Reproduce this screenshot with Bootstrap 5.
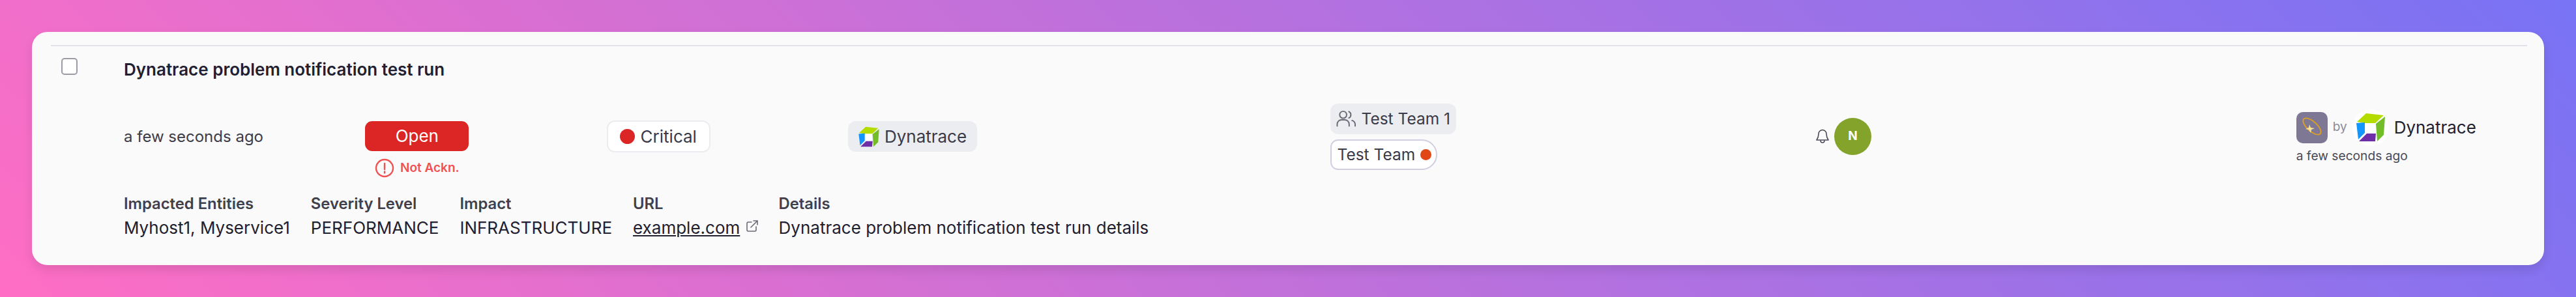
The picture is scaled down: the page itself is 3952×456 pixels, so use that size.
<!DOCTYPE html>
<html lang="en">

<head>
  <meta charset="UTF-8" />
  <title>Alert row</title>
  <link href="https://cdn.jsdelivr.net/npm/bootstrap@5.3.0/dist/css/bootstrap.min.css" rel="stylesheet">
  <style>
    body {
      margin: 0;
      height: 456px;
      padding: 49px;
      overflow: hidden;
      background: linear-gradient(45deg, #ff6ec4, #7873f5);
      font-family: Inter, "Liberation Sans", sans-serif;
      color: #1f2030;
    }

    .alert-card {
      height: 358px;
      padding: 20px 26px 0 29px;
      border: 0;
      border-radius: 24px;
      background: #fafafb;
      box-shadow: 0 8px 16px rgba(0, 0, 0, 0.1);
    }

    .alert-rule {
      height: 2px;
      margin: 0;
      border: 0;
      opacity: 1;
      background: #e2e2ec;
    }

    .title-row { margin-top: 18px; }

    .alert-check.form-check-input {
      width: 25px;
      height: 26px;
      margin: 0 71px 0 16px;
      border: 2px solid #9b9ba5;
      border-radius: 5px;
      background-color: #fff;
    }

    .alert-title {
      font-size: 26px;
      font-weight: 600;
      line-height: 36px;
    }

    .alert-grid {
      display: grid;
      grid-template-columns: repeat(10, 370.3px);
      height: 103px;
      margin: 33px 0 0 112px;
      font-size: 26px;
      align-items: center;
    }

    .time-text { color: #3c3c49; font-size: 24px; }

    .span-2 { grid-column: span 2; }

    .status-col { align-self: start; width: 159px; margin: 28px 0 -12px; }

    .status-btn {
      width: 159px;
      height: 46px;
      padding: 0;
      border: 0;
      border-radius: 11px;
      background: #dc2626;
      color: #fff;
      font-size: 26px;
      line-height: 46px;
    }

    .not-ackn {
      gap: 9px;
      height: 30px;
      margin-top: 11px;
      color: #f05252;
      font-size: 19px;
      font-weight: 600;
    }

    .chip {
      height: 47px;
      padding: 0 16px;
      border-radius: 12px;
      background: #ecedf0;
      color: #3a3a48;
      white-space: nowrap;
    }

    .chip-outline { gap: 9px; height: 49px; padding: 0 19px 0 18px; background: #fff; border: 2px solid #ececf0; }

    .team-chip { padding: 0 9px; font-size: 24.5px; }

    .team-owner {
      padding: 0 7px 0 8px;
      background: #fff;
      border: 2px solid #cfcfe0;
      border-radius: 12px 24px 24px 12px;
      font-size: 24.5px;
    }

    .sev-dot { width: 23px; height: 23px; border-radius: 50%; background: #dc2626; }

    .owner-dot { width: 17px; height: 17px; border-radius: 50%; background: #e04616; }

    .avatar-dot {
      width: 57px;
      height: 57px;
      border-radius: 50%;
      background: #84a32a;
      color: #fff;
      font-size: 19px;
      font-weight: 700;
    }

    .app-tile { width: 48px; height: 48px; border-radius: 10px; background: #7f7894; }

    .by-text { color: #8b8b96; font-size: 19px; }

    .logo-ring { width: 56px; height: 56px; border-radius: 50%; background: #fff; }

    .time-small { margin-top: 2px; color: #4a4a57; font-size: 19.2px; line-height: 26px; }

    .detail-row {
      gap: 32px;
      margin: 33px 0 0 112px;
      font-size: 26px;
      line-height: 37px;
    }

    .detail-label { color: #40404b; font-size: 23.8px; font-weight: 600; }

    .detail-link { color: #1f2030; }

    .ext-icon { margin-left: 2px; vertical-align: 3px; }
  </style>
</head>

<body>
  <div class="card alert-card">
    <hr class="alert-rule">

    <div class="title-row d-flex align-items-start">
      <input class="form-check-input alert-check" type="checkbox">
      <div class="alert-title">Dynatrace problem notification test run</div>
    </div>

    <div class="alert-grid">
      <div class="time-text">a few seconds ago</div>

      <div class="status-col">
        <button type="button" class="btn status-btn">Open</button>
        <div class="not-ackn d-flex align-items-center justify-content-center">
          <svg width="30" height="30" viewBox="0 0 30 30" fill="none" stroke="#f05252" stroke-width="2.4">
            <circle cx="15" cy="15" r="13" />
            <path d="M15 8v9M15 20.5v2" stroke-linecap="round" />
          </svg>
          <span>Not Ackn.</span>
        </div>
      </div>

      <div class="d-flex">
        <div class="chip chip-outline d-flex align-items-center">
          <span class="sev-dot"></span>Critical
        </div>
      </div>

      <div class="span-2 d-flex">
        <div class="chip d-flex align-items-center gap-2">
          <svg width="32" height="32" viewBox="0 0 44 45">
            <path fill="#b4dc00" d="M1 14 15 1l27 3-13 12H13z" />
            <path fill="#1496ff" d="M0 16l13-1v16L3 41z" />
            <path fill="#73be28" d="M44 6l-2 28-10 10-2-27z" />
            <path fill="#6f2da8" d="M4 44l12-12h14l-1 12z" />
            <path fill="#fff" d="M14 16h15v15H14z" />
          </svg>
          Dynatrace
        </div>
      </div>

      <div class="span-2 d-flex flex-column align-items-start gap-2">
        <div class="chip team-chip d-flex align-items-center gap-2">
          <svg width="30" height="26" viewBox="0 0 31 26" fill="none" stroke="#6a6a76" stroke-width="2" stroke-linecap="round">
            <circle cx="11" cy="7" r="5.5" />
            <path d="M1.500 25v-3a7 7 0 0 1 7-7h5a7 7 0 0 1 7 7v3M20 2a5.500 5.500 0 0 1 0 10M25 16a7 7 0 0 1 5 6v3" />
          </svg>
          Test Team 1
        </div>
        <div class="chip team-owner d-flex align-items-center gap-2">
          Test Team <span class="owner-dot"></span>
        </div>
      </div>

      <div class="span-2 d-flex align-items-center gap-2">
        <svg class="ms-1" width="20" height="23" viewBox="0 0 20 23" fill="none" stroke="#4a4a57" stroke-width="1.6" stroke-linejoin="round">
          <path d="M10 1.500a6 6 0 0 0-6 6c0 5-2 8-3 9.500h18c-1-1.500-3-4.500-3-9.500a6 6 0 0 0-6-6z" />
          <path d="M7 17.500a3 3.500 0 0 0 6 0" />
        </svg>
        <div class="avatar-dot d-flex align-items-center justify-content-center">N</div>
      </div>

      <div>
        <div class="d-flex align-items-center gap-2">
          <div class="app-tile">
            <svg width="48" height="48" viewBox="0 0 48 48" fill="none">
              <ellipse cx="24" cy="22" rx="17" ry="7.500" transform="rotate(42 24 22)" stroke="#e0a020" stroke-width="1.800" />
              <path fill="#f8e39a" d="M20 19l2 5 6 1-5 2-1 5-3-5-5-1 5-2z" />
            </svg>
          </div>
          <span class="by-text">by</span>
          <div class="logo-ring d-flex align-items-center justify-content-center">
            <svg width="44" height="45" viewBox="0 0 44 45">
              <path fill="#b4dc00" d="M1 14 15 1l27 3-13 12H13z" />
              <path fill="#1496ff" d="M0 16l13-1v16L3 41z" />
              <path fill="#73be28" d="M44 6l-2 28-10 10-2-27z" />
              <path fill="#6f2da8" d="M4 44l12-12h14l-1 12z" />
            </svg>
          </div>
          <span>Dynatrace</span>
        </div>
        <div class="time-small">a few seconds ago</div>
      </div>
    </div>

    <div class="detail-row d-flex">
      <div>
        <div class="detail-label">Impacted Entities</div>
        <div>Myhost1, Myservice1</div>
      </div>
      <div>
        <div class="detail-label">Severity Level</div>
        <div>PERFORMANCE</div>
      </div>
      <div>
        <div class="detail-label">Impact</div>
        <div>INFRASTRUCTURE</div>
      </div>
      <div>
        <div class="detail-label">URL</div>
        <div>
          <a class="detail-link" href="#">example.com</a>
          <svg class="ext-icon" width="18" height="18" viewBox="0 0 18 18" fill="none" stroke="#6a6a76" stroke-width="1.600" stroke-linecap="round">
            <path d="M8 3H3a2 2 0 0 0-2 2v10a2 2 0 0 0 2 2h10a2 2 0 0 0 2-2v-5M7 11 17 1M11 1h6v6" />
          </svg>
        </div>
      </div>
      <div>
        <div class="detail-label">Details</div>
        <div>Dynatrace problem notification test run details</div>
      </div>
    </div>
  </div>

  <script src="https://cdn.jsdelivr.net/npm/bootstrap@5.3.0/dist/js/bootstrap.bundle.min.js"></script>
</body>

</html>
